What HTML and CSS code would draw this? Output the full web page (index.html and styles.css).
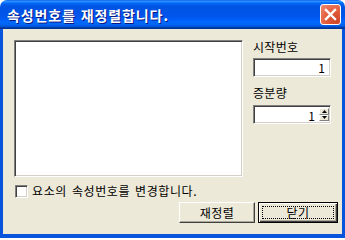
FILE: index.html
```html
<!DOCTYPE html>
<html lang="ko">
<head>
<meta charset="utf-8">
<link rel="stylesheet" href="styles.css">
</head>
<body>
<div class="window">
  <div class="titlebar">
    <span class="title">속성번호를 재정렬합니다.</span>
    <div class="close">
      <svg width="13" height="13" viewBox="0 0 13 13"><path d="M2 2 L11 11 M11 2 L2 11" stroke="#fff" stroke-width="2.4" stroke-linecap="square"/></svg>
    </div>
  </div>
  <div class="frame">
    <div class="main">
      <div class="listbox"></div>
      <div class="side">
        <div class="label">시작번호</div>
        <div class="edit"><span>1</span></div>
        <div class="label label2">증분량</div>
        <div class="edit spinedit">
          <span>1</span>
          <div class="spin">
            <div class="sbtn"><svg width="5" height="3" viewBox="0 0 5 3"><path d="M2.5 0 L5 3 L0 3 Z" fill="#000"/></svg></div>
            <div class="sbtn"><svg width="5" height="3" viewBox="0 0 5 3"><path d="M0 0 L5 0 L2.5 3 Z" fill="#000"/></svg></div>
          </div>
        </div>
      </div>
    </div>
    <div class="checkrow">
      <div class="checkbox"></div>
      <span class="checktext">요소의 속성번호를 변경합니다.</span>
    </div>
    <div class="buttons">
      <div class="btn">재정렬</div>
      <div class="btn default"><span class="focus">닫기</span></div>
    </div>
  </div>
</div>
</body>
</html>
```
FILE: styles.css
```css
html, body {
  margin: 0;
  padding: 0;
  background: #fff;
}
.window {
  width: 345px;
  height: 238px;
  display: flex;
  flex-direction: column;
  font-family: "Noto Sans CJK KR", "DejaVu Sans", sans-serif;
  font-size: 12px;
  color: #000;
}
.titlebar {
  height: 29px;
  flex: none;
  display: flex;
  align-items: center;
  justify-content: space-between;
  border-radius: 7px 7px 0 0;
  background: linear-gradient(to bottom, #0058EE 0%, #3593FF 4%, #288EFF 6%, #127DFF 8%, #036FFC 10%, #0262EE 14%, #0057E5 20%, #0054E3 24%, #0055EB 56%, #005BF5 66%, #026AFE 76%, #0062EF 86%, #0052D6 92%, #0040AB 94%, #003092 100%);
}
.title {
  color: #fff;
  font-weight: bold;
  font-size: 14px;
  line-height: 16px;
  letter-spacing: 0.9px;
  padding-left: 7px;
  text-shadow: 1px 1px #0A1883;
}
.close {
  width: 21px;
  height: 21px;
  box-sizing: border-box;
  margin-right: 4px;
  border: 1px solid #fff;
  border-radius: 3px;
  background: radial-gradient(circle at 80% 85%, #CC4628 0%, #E25B3A 45%, #EE8A6E 100%);
  display: flex;
  align-items: center;
  justify-content: center;
}
.frame {
  flex: 1;
  background: #ECE9D8;
  border-style: solid;
  border-color: #0855DD;
  border-width: 0 3px 4px 3px;
  padding: 11px 0 0 11px;
  display: flex;
  flex-direction: column;
}
.main {
  display: flex;
}
.listbox {
  width: 229px;
  height: 137px;
  box-sizing: border-box;
  background: #fff;
  border: 1px solid;
  border-color: #808080 #fff #fff #808080;
  box-shadow: inset 1px 1px #404040, inset -1px -1px #D4D0C8;
}
.side {
  margin-left: 10px;
  width: 78px;
  display: flex;
  flex-direction: column;
}
.label {
  line-height: 14px;
  height: 14px;
  letter-spacing: 0.3px;
}
.label2 {
  margin-top: 9px;
}
.edit {
  margin-top: 4px;
  height: 19px;
  box-sizing: border-box;
  background: #fff;
  border: 1px solid;
  border-color: #808080 #fff #fff #808080;
  box-shadow: inset 1px 1px #404040, inset -1px -1px #D4D0C8;
  display: flex;
  align-items: center;
  justify-content: flex-end;
  padding: 0 5px 0 2px;
  line-height: 14px;
}
.spinedit {
  margin-top: 5px;
  padding: 2px 1px 2px 2px;
  align-items: stretch;
}
.spinedit span {
  line-height: 15px;
  margin-right: 4px;
}
.spin {
  width: 10px;
  display: flex;
  flex-direction: column;
}
.sbtn {
  flex: 1;
  background: #ECE9D8;
  box-sizing: border-box;
  border: 1px solid;
  border-color: #fff #808080 #808080 #fff;
  display: flex;
  align-items: center;
  justify-content: center;
}
.sbtn svg {
  display: block;
}
.checkrow {
  margin-top: 7px;
  margin-left: 1px;
  display: flex;
  align-items: center;
  gap: 4px;
  line-height: 14px;
}
.checktext {
  letter-spacing: 0.6px;
  word-spacing: 1px;
}
.checkbox {
  width: 13px;
  height: 13px;
  box-sizing: border-box;
  background: #fff;
  border: 1px solid;
  border-color: #808080 #fff #fff #808080;
  box-shadow: inset 1px 1px #404040, inset -1px -1px #D4D0C8;
}
.buttons {
  margin-top: 4px;
  display: flex;
  justify-content: flex-end;
  gap: 3px;
  padding-right: 4px;
}
.btn {
  width: 76px;
  height: 21px;
  box-sizing: border-box;
  background: #ECE9D8;
  border: 1px solid;
  border-color: #fff #404040 #404040 #fff;
  box-shadow: inset -1px -1px #ACA899;
  display: flex;
  align-items: center;
  justify-content: center;
  line-height: 14px;
  letter-spacing: 0.5px;
}
.btn.default {
  width: 80px;
  border: 1px solid #000;
  box-shadow: inset 1px 1px #fff, inset -1px -1px #404040, inset -2px -2px #ACA899;
  padding: 3px;
}
.focus {
  flex: 1;
  align-self: stretch;
  border: 1px dotted #000;
  display: flex;
  align-items: center;
  justify-content: center;
}
```
